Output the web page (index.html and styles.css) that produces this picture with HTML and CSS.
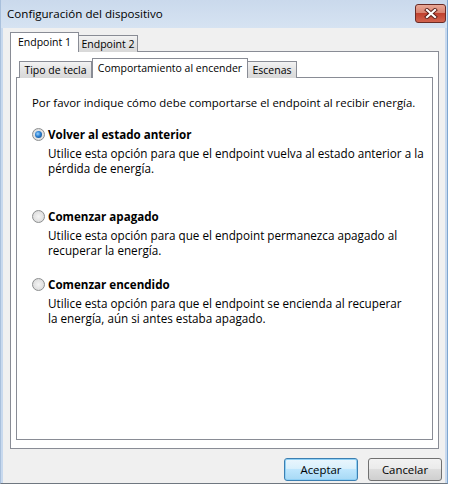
FILE: index.html
```html
<!DOCTYPE html>
<html lang="es">
<head>
    <meta charset="UTF-8">
    <title>Configuración del dispositivo</title>
    <link rel="stylesheet" href="styles.css">
</head>
<body>
    <div class="window">
        <div class="titlebar">
            <span class="title">Configuración del dispositivo</span>
            <div class="close-btn">
                <svg width="14" height="11" viewBox="0 0 14 11">
                    <path d="M3 2 L11 9 M11 2 L3 9" stroke="#5a1e18" stroke-width="4" stroke-linecap="square"/>
                    <path d="M3 2 L11 9 M11 2 L3 9" stroke="#fff" stroke-width="2.2" stroke-linecap="square"/>
                </svg>
            </div>
        </div>
        <div class="client">
            <div class="tabs outer-tabs">
                <div class="tab active tab-ep1">Endpoint 1</div>
                <div class="tab tab-ep2">Endpoint 2</div>
            </div>
            <div class="panel outer-panel">
                <div class="tabs inner-tabs">
                    <div class="tab tab-key">Tipo de tecla</div>
                    <div class="tab active tab-power">Comportamiento al encender</div>
                    <div class="tab tab-scenes">Escenas</div>
                </div>
                <div class="panel inner-panel">
                    <p class="intro">Por favor indique cómo debe comportarse el endpoint al recibir energía.</p>

                    <div class="option option-first">
                        <label class="radio-row">
                            <span class="radio checked"></span>
                            <span class="label">Volver al estado anterior</span>
                        </label>
                        <p class="desc">Utilice esta opción para que el endpoint vuelva al estado anterior a la<br>pérdida de energía.</p>
                    </div>

                    <div class="option option-second">
                        <label class="radio-row">
                            <span class="radio"></span>
                            <span class="label">Comenzar apagado</span>
                        </label>
                        <p class="desc">Utilice esta opción para que el endpoint permanezca apagado al<br>recuperar la energía.</p>
                    </div>

                    <div class="option option-third">
                        <label class="radio-row">
                            <span class="radio"></span>
                            <span class="label">Comenzar encendido</span>
                        </label>
                        <p class="desc">Utilice esta opción para que el endpoint se encienda al recuperar<br>la energía, aún si antes estaba apagado.</p>
                    </div>
                </div>
            </div>
            <div class="buttons">
                <button class="btn default">Aceptar</button>
                <button class="btn">Cancelar</button>
            </div>
        </div>
    </div>
</body>
</html>
```

FILE: styles.css
```css
body {
    margin: 0;
    background: #fff;
    font-family: "Open Sans", "Noto Sans", sans-serif;
    font-size: 11.4px;
    color: #000;
}

.window {
    width: 448px;
    height: 484px;
    border-left: 1px solid #a9c0dc;
    border-right: 1px solid #7fa6cf;
    border-bottom: 1px solid #6f7780;
    background: #c8d9ee;
    padding: 0 2px 0 2px;
    box-sizing: border-box;
    display: flex;
    flex-direction: column;
}

.titlebar {
    height: 28px;
    flex-shrink: 0;
    display: flex;
    align-items: flex-start;
    justify-content: space-between;
    background: linear-gradient(#cad9ec, #d6e3f2);
    margin: 0 -2px;
    padding: 0 1px 0 6px;
}

.title {
    font-size: 11.6px;
    line-height: 12px;
    margin-top: 8px;
    color: #000;
}

.close-btn {
    width: 29px;
    height: 17px;
    margin-top: 4px;
    border: 1px solid #6a2b25;
    border-radius: 3px;
    background: linear-gradient(#e9a897 0%, #d98572 45%, #c0412f 50%, #d2644f 100%);
    display: flex;
    align-items: center;
    justify-content: center;
}

.client {
    flex: 1;
    background: #f0f0f0;
    padding: 4px 7px 0 7px;
}

.tabs {
    display: flex;
    align-items: flex-end;
    position: relative;
    z-index: 1;
}

.tab {
    height: 16px;
    line-height: 16px;
    font-size: 10.5px;
    text-align: center;
    border: 1px solid #898c95;
    border-bottom: none;
    background: linear-gradient(#f3f3f3, #e3e3e3 50%, #d8d8d8);
    margin-bottom: -1px;
    white-space: nowrap;
    box-sizing: border-box;
}

.tab.active {
    height: 20px;
    line-height: 18px;
    background: #fff;
}

.tab-ep1 {
    width: 69px;
}

.tab-ep2 {
    width: 59px;
    height: 17px;
    border-left: none;
}

.inner-tabs {
    padding-left: 3px;
}

.tab-key {
    width: 73px;
}

.tab-power {
    width: 156px;
}

.tab-scenes {
    width: 49px;
    border-left: none;
}

.tab-key,
.tab-scenes {
    height: 17px;
}

.panel {
    border: 1px solid #898c95;
    background: #fff;
}

.outer-panel {
    width: 429px;
    height: 398px;
    box-sizing: border-box;
    padding: 6px 5px 8px 5px;
    display: flex;
    flex-direction: column;
}

.inner-panel {
    flex: 1;
    padding: 17px 0 0 15px;
}

.intro {
    margin: 0;
    line-height: 15px;
}

.option {
    display: flex;
    flex-direction: column;
}

.option-first {
    margin-top: 17px;
}

.option-second {
    margin-top: 33px;
}

.option-third {
    margin-top: 19px;
}

.radio-row {
    display: flex;
    align-items: center;
    gap: 3px;
    height: 15px;
}

.radio {
    width: 11px;
    height: 11px;
    border: 1px solid #8c8e8f;
    border-radius: 50%;
    background: radial-gradient(circle at 50% 50%, #f4f4f4 0%, #dedede 70%, #cfcfcf 100%);
    box-sizing: content-box;
    position: relative;
}

.radio.checked::after {
    content: "";
    position: absolute;
    left: 2px;
    top: 2px;
    width: 7px;
    height: 7px;
    border-radius: 50%;
    background: radial-gradient(circle at 40% 40%, #9ad3ff 0%, #2a7fd0 45%, #0f3e75 100%);
}

.label {
    font-weight: bold;
    font-size: 11.6px;
}

.desc {
    margin: 4px 0 0 16px;
    line-height: 15px;
    font-size: 11.7px;
}

.buttons {
    display: flex;
    justify-content: flex-end;
    gap: 10px;
    margin-top: 9px;
    margin-right: -4px;
}

.btn {
    width: 74px;
    height: 23px;
    font-family: inherit;
    font-size: 11.4px;
    border: 1px solid #707070;
    border-radius: 3px;
    background: linear-gradient(#f2f2f2 0%, #ebebeb 45%, #dddddd 50%, #cfcfcf 100%);
    color: #000;
    padding: 0;
}

.btn.default {
    border-color: #3c7fb1;
    background: linear-gradient(#eaf6fd 0%, #d9f0fc 45%, #bee6fd 50%, #a7d9f5 100%);
    box-shadow: inset 0 0 0 1px #8fd0f5;
}
```
